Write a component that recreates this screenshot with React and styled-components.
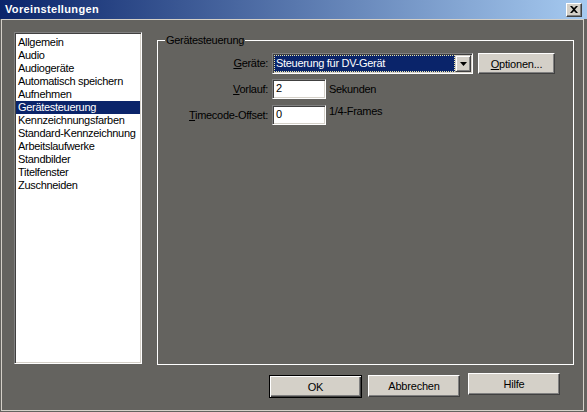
import React from "react";
import styled, { createGlobalStyle } from "styled-components";

const GlobalStyle = createGlobalStyle`
  html, body { margin: 0; padding: 0; background: #64635f; }
  body { font-family: "Liberation Sans", Arial, sans-serif; font-size: 11px; color: #000; }
  * { box-sizing: border-box; }
`;

const Window = styled.div`
  width: 587px;
  height: 412px;
  display: flex;
  flex-direction: column;
  background: #64635f;
  overflow: hidden;
`;

const TitleBar = styled.div`
  height: 19px;
  flex: none;
  display: flex;
  align-items: center;
  justify-content: space-between;
  padding: 0 5px 0 5px;
  background: linear-gradient(to right, #0a246a, #a6caf0);
`;

const Title = styled.span`
  color: #fff;
  font-weight: bold;
  font-size: 11px;
  letter-spacing: 0.35px;
  line-height: 13px;
`;

const CloseButton = styled.div`
  width: 16px;
  height: 14px;
  display: flex;
  align-items: center;
  justify-content: center;
  background: #d4d0c8;
  border: 1px solid;
  border-color: #fff #404040 #404040 #fff;
  box-shadow: inset -1px -1px 0 #808080;
`;

const Body = styled.div`
  flex: 1;
  margin: 0 3px 1px 1px;
  border: 1px solid #d4d0c8;
  padding: 12px 23px 0 12px;
  display: flex;
  flex-direction: column;
`;

const Main = styled.div`
  display: flex;
  align-items: flex-start;
  gap: 15px;
`;

const ListBox = styled.ul`
  list-style: none;
  margin: 0;
  padding: 3px 1px 0 1px;
  width: 128px;
  height: 332px;
  flex: none;
  background: #fff;
  border: 1px solid;
  border-color: #808080 #fff #fff #808080;
  box-shadow: inset 1px 1px 0 #404040, inset -1px -1px 0 #d4d0c8;
`;

const ListItem = styled.li`
  height: 13px;
  line-height: 13px;
  padding-left: 2px;
  white-space: nowrap;
  letter-spacing: -0.3px;
  background: ${(p) => (p.$selected ? "#0a246a" : "transparent")};
  color: ${(p) => (p.$selected ? "#fff" : "#000")};
`;

const Group = styled.fieldset`
  margin: 2px 0 0 0;
  padding: 0;
  width: 417px;
  height: 331px;
  flex: none;
  min-width: 0;
  border: 1px solid #fff;
`;

const Legend = styled.legend`
  margin-left: 7px;
  padding: 0 1px;
  font-size: 11px;
  line-height: 13px;
  letter-spacing: -0.3px;
  color: #000;
`;

const Form = styled.div`
  display: grid;
  grid-template-rows: 21px 21px 20px;
  row-gap: 5px;
  padding: 6px 0 0 10px;
`;

const FormRow = styled.div`
  display: flex;
  align-items: ${(p) => (p.$top ? "flex-start" : "center")};
  gap: 4px;
`;

const Label = styled.label`
  width: 100px;
  flex: none;
  text-align: right;
  line-height: 13px;
  letter-spacing: -0.3px;
  white-space: nowrap;
  align-self: center;
`;

const Combo = styled.div`
  width: 201px;
  height: 21px;
  display: flex;
  padding: 1px;
  background: #fff;
  border: 1px solid;
  border-color: #808080 #fff #fff #808080;
  box-shadow: inset 1px 1px 0 #404040, inset -1px -1px 0 #d4d0c8;
`;

const ComboValue = styled.div`
  flex: 1;
  height: 17px;
  background: #0a246a;
  color: #fff;
  border: 1px dotted #e8e4a8;
  padding-left: 1px;
  line-height: 15px;
  letter-spacing: -0.3px;
  white-space: nowrap;
  overflow: hidden;
`;

const DropButton = styled.div`
  width: 16px;
  height: 17px;
  flex: none;
  display: flex;
  align-items: center;
  justify-content: center;
  background: #d4d0c8;
  border: 1px solid;
  border-color: #d4d0c8 #404040 #404040 #d4d0c8;
  box-shadow: inset 1px 1px 0 #fff, inset -1px -1px 0 #808080;
`;

const TextInput = styled.div`
  width: ${(p) => p.$w}px;
  height: 20px;
  flex: none;
  padding-left: 3px;
  background: #fff;
  line-height: 16px;
  border: 1px solid;
  border-color: #808080 #fff #fff #808080;
  box-shadow: inset 1px 1px 0 #404040, inset -1px -1px 0 #d4d0c8;
`;

const Unit = styled.span`
  line-height: 13px;
  letter-spacing: -0.3px;
  margin-left: -1px;
  align-self: ${(p) => (p.$top ? "flex-start" : "center")};
`;

const Button = styled.button`
  width: ${(p) => p.$w}px;
  height: ${(p) => p.$h}px;
  flex: none;
  padding: 0;
  margin: 0;
  margin-top: ${(p) => p.$shift || 0}px;
  margin-left: ${(p) => p.$gapLeft || 0}px;
  font-family: "Liberation Sans", Arial, sans-serif;
  font-size: 11px;
  letter-spacing: -0.2px;
  color: #000;
  background: #d4d0c8;
  border: 1px solid;
  border-color: ${(p) => (p.$default ? "#000" : "#fff #404040 #404040 #fff")};
  box-shadow: ${(p) =>
    p.$default
      ? "inset 1px 1px 0 #fff, inset -1px -1px 0 #404040, inset -2px -2px 0 #808080"
      : "inset -1px -1px 0 #808080, inset 1px 1px 0 #d4d0c8"};
`;

const ButtonRow = styled.div`
  display: flex;
  justify-content: flex-end;
  align-items: flex-start;
  gap: 6px;
  margin-top: 10px;
`;

const items = [
  "Allgemein",
  "Audio",
  "Audiogeräte",
  "Automatisch speichern",
  "Aufnehmen",
  "Gerätesteuerung",
  "Kennzeichnungsfarben",
  "Standard-Kennzeichnung",
  "Arbeitslaufwerke",
  "Standbilder",
  "Titelfenster",
  "Zuschneiden",
];

export default function App() {
  return (
    <>
      <GlobalStyle />
      <Window>
        <TitleBar>
          <Title>Voreinstellungen</Title>
          <CloseButton>
            <svg width="8" height="7" viewBox="0 0 8 7">
              <path d="M0 0h2l2 2 2-2h2L5 3.5 8 7H6L4 5 2 7H0l3-3.5z" fill="#000" />
            </svg>
          </CloseButton>
        </TitleBar>
        <Body>
          <Main>
            <ListBox>
              {items.map((it) => (
                <ListItem key={it} $selected={it === "Gerätesteuerung"}>
                  {it}
                </ListItem>
              ))}
            </ListBox>
            <Group>
              <Legend>Gerätesteuerung</Legend>
              <Form>
                <FormRow>
                  <Label>
                    <u>G</u>eräte:
                  </Label>
                  <Combo>
                    <ComboValue>Steuerung für DV-Gerät</ComboValue>
                    <DropButton>
                      <svg width="7" height="4" viewBox="0 0 7 4">
                        <path d="M0 0h7L3.5 4z" fill="#000" />
                      </svg>
                    </DropButton>
                  </Combo>
                  <Button $w={77} $h={21} $gapLeft={1}>
                    <u>O</u>ptionen...
                  </Button>
                </FormRow>
                <FormRow $top>
                  <Label>
                    <u>V</u>orlauf:
                  </Label>
                  <TextInput $w={54}>2</TextInput>
                  <Unit>Sekunden</Unit>
                </FormRow>
                <FormRow $top>
                  <Label>
                    <u>T</u>imecode-Offset:
                  </Label>
                  <TextInput $w={54}>0</TextInput>
                  <Unit $top>1/4-Frames</Unit>
                </FormRow>
              </Form>
            </Group>
          </Main>
          <ButtonRow>
            <Button $w={93} $h={23} $default>
              OK
            </Button>
            <Button $w={92} $h={22}>
              Abbrechen
            </Button>
            <Button $w={92} $h={22} $shift={-2} $gapLeft={2}>
              Hilfe
            </Button>
          </ButtonRow>
        </Body>
      </Window>
    </>
  );
}
